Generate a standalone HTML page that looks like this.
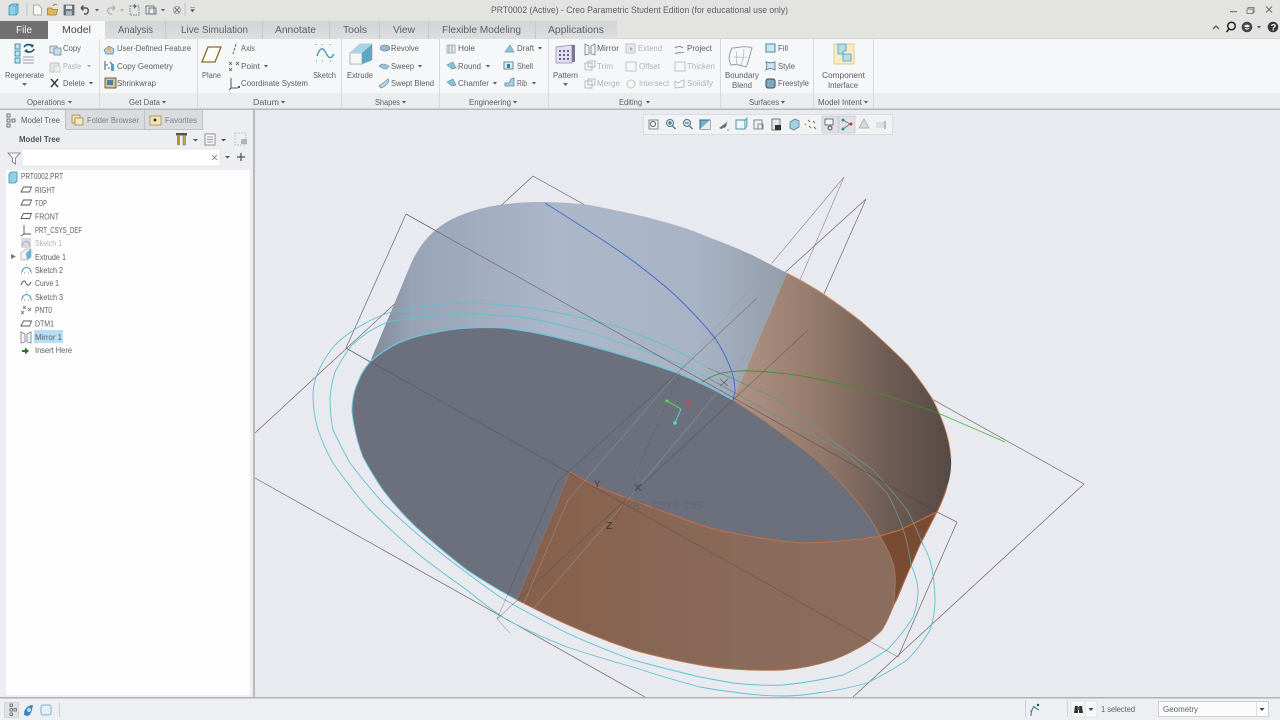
<!DOCTYPE html>
<html><head><meta charset="utf-8"><title>PRT0002 (Active) - Creo Parametric</title>
<style>
html,body{margin:0;padding:0;width:1280px;height:720px;overflow:hidden;background:#e9eaef}
svg{display:block;filter:blur(.35px)}
text{font-family:"Liberation Sans",sans-serif;font-size:8.6px;fill:#5a5f64}
.t{font-size:10.4px;fill:#5c6166}
.g{fill:#b0b3b6}
.l{fill:none;stroke:#6d666c;stroke-width:.7}
.ll{fill:none;stroke:#8b868c;stroke-width:.6}
</style></head><body>
<svg width="1280" height="720" viewBox="0 0 1280 720" xmlns="http://www.w3.org/2000/svg">
<defs>
<linearGradient id="bw" gradientUnits="userSpaceOnUse" x1="370" y1="0" x2="790" y2="0"><stop offset="0" stop-color="#7f8999"/><stop offset=".1" stop-color="#98a3b5"/><stop offset=".45" stop-color="#acb7ca"/><stop offset=".78" stop-color="#a8b3c5"/><stop offset="1" stop-color="#929ca9"/></linearGradient>
<linearGradient id="ow" gradientUnits="userSpaceOnUse" x1="740" y1="0" x2="951" y2="0"><stop offset="0" stop-color="#ae9283"/><stop offset=".4" stop-color="#917769"/><stop offset=".7" stop-color="#6e5c54"/><stop offset="1" stop-color="#564a46"/></linearGradient>
<linearGradient id="lw" gradientUnits="userSpaceOnUse" x1="520" y1="0" x2="895" y2="0"><stop offset="0" stop-color="#86604c"/><stop offset=".6" stop-color="#8a6a5a"/><stop offset="1" stop-color="#8b6d5e"/></linearGradient>
<linearGradient id="tb" x1="0" y1="0" x2="0" y2="1"><stop offset="0" stop-color="#d2d5d7"/><stop offset="1" stop-color="#dcdee0"/></linearGradient>
<g id="pl"><path d="M2.500 1h8l-2 5H0z" fill="none" stroke="#5c5c5c" stroke-width=".9"/></g>
<g id="sk"><path d="M1 8C2 2 9 2 10 8" fill="none" stroke="#3f93b4" stroke-width="1.100"/><path d="M0 9h1M3 9h1M7 9h1M10 9h1M5 1h1" stroke="#555" stroke-width=".8"/></g>
</defs>

<rect width="1280" height="720" fill="#e9eaef"/>
<rect width="1280" height="39" fill="#e3e4e2"/>
<rect y="39" width="1280" height="54" fill="#f6f7f9"/>
<rect y="93" width="1280" height="16" fill="#ebecee"/>
<rect y="38" width="1280" height="1" fill="#d4d6d8"/>
<rect y="108.500" width="1280" height="1.500" fill="#b5b7ba"/>

<!-- QAT -->
<path d="M9 6l3-2h6v9l-2 2H9z" fill="#8fd0e8" stroke="#3d8fb0" stroke-width=".8"/><path d="M9 6h7v9M16 6l2-2" fill="none" stroke="#3d8fb0" stroke-width=".6"/>
<rect x="26.500" y="3" width="1" height="13" fill="#c4c5c4"/>
<path d="M33.500 5h5l3 3v7h-8z" fill="#f7f7f5" stroke="#9a9a9a" stroke-width=".8"/>
<path d="M47.500 8h4l1 1.500h5l-1.500 5.500h-8.500z" fill="#e2b65e" stroke="#a37a30" stroke-width=".8"/><path d="M53 6c1-2 3-2 4-1" fill="none" stroke="#a37a30"/>
<rect x="64" y="5" width="10" height="10" fill="#6d7780" stroke="#4d555c" stroke-width=".7"/><rect x="66" y="5.500" width="6" height="3.500" fill="#e5e7e9"/><rect x="66" y="11" width="6" height="4" fill="#aeb4ba"/>
<path d="M81 8h5c3 0 3 5 0 6h-2M81 8l2.500-2.500M81 8l2.500 2.500" fill="none" stroke="#4a5058" stroke-width="1.400"/>
<path d="M95 9h4l-2 2.500z" fill="#5a5f64"/>
<path d="M115 8h-5c-3 0-3 5 0 6h2M115 8l-2.500-2.500M115 8l-2.500 2.500" fill="none" stroke="#aab0b6" stroke-width="1.300"/>
<path d="M120 9h4l-2 2.500z" fill="#aab0b6"/>
<rect x="130" y="6" width="9" height="9" fill="none" stroke="#6a7580" stroke-dasharray="1.500 1" stroke-width=".9"/><path d="M134 4l3 2-3 3z" fill="#2f7f9a"/>
<rect x="146" y="6" width="8" height="8" fill="#e8eaec" stroke="#66707a" stroke-width=".9"/><rect x="149" y="8" width="7" height="6" fill="none" stroke="#66707a" stroke-width=".9"/>
<path d="M161 9h4l-2 2.500z" fill="#5a5f64"/>
<path d="M174 7l6 6M180 7l-6 6" stroke="#6d7277" stroke-width="1"/><circle cx="177" cy="10" r="3.500" fill="none" stroke="#8a8f94" stroke-width=".7"/>
<rect x="184.500" y="3" width="1" height="13" fill="#c4c5c4"/>
<path d="M190 7.500h5M190.500 9.500h4l-2 2.500z" fill="#5a5f64" stroke="#5a5f64" stroke-width=".5"/>

<text x="491" y="13" textLength="297" lengthAdjust="spacingAndGlyphs" style="font-size:9.200px;fill:#5a5f63">PRT0002 (Active) - Creo Parametric Student Edition (for educational use only)</text>

<!-- window controls -->
<rect x="1230" y="11" width="7" height="1.200" fill="#777"/>
<rect x="1248" y="7.500" width="6" height="5" fill="none" stroke="#777" stroke-width=".9"/><rect x="1247" y="9" width="6" height="4.500" fill="#e3e4e2" stroke="#777" stroke-width=".9"/>
<path d="M1266 6.500l6 6M1272 6.500l-6 6" stroke="#777" stroke-width="1.200"/>
<path d="M1213 29l3-3 3 3" fill="none" stroke="#555" stroke-width="1.300"/>
<circle cx="1231.500" cy="26" r="3.800" fill="none" stroke="#222" stroke-width="1.500"/><path d="M1229 29l-2.500 3" stroke="#222" stroke-width="1.700"/>
<circle cx="1247" cy="27" r="5.300" fill="#3f4448"/><path d="M1243.500 26l3.500-1.500 3.500 1.500-3.500 1.500z" fill="#fff"/><path d="M1245 28c1 1.500 3 1.500 4 0" stroke="#fff" fill="none"/>
<path d="M1257 26h4l-2 2.500z" fill="#555"/>
<circle cx="1273" cy="27" r="5.300" fill="#33383c"/><text x="1270.500" y="30.500" style="font-size:9.500px;font-weight:bold;fill:#fff">?</text>

<!-- Tabs -->
<rect x="0" y="21" width="48" height="18" fill="#707070"/>
<rect x="105" y="21" width="512" height="18" fill="url(#tb)"/>
<rect x="48" y="21" width="57" height="19" fill="#f7f8fa"/>
<g fill="#c6c8ca"><rect x="165" y="21" width="1" height="18"/><rect x="262" y="21" width="1" height="18"/><rect x="329" y="21" width="1" height="18"/><rect x="379" y="21" width="1" height="18"/><rect x="428" y="21" width="1" height="18"/><rect x="535" y="21" width="1" height="18"/></g>
<text class="t" x="16" y="33" textLength="16" lengthAdjust="spacingAndGlyphs" style="fill:#f2f2f2">File</text>
<text class="t" x="62" y="33" textLength="29" lengthAdjust="spacingAndGlyphs" style="fill:#44494e">Model</text>
<text class="t" x="118" y="33" textLength="35" lengthAdjust="spacingAndGlyphs">Analysis</text>
<text class="t" x="181" y="33" textLength="67" lengthAdjust="spacingAndGlyphs">Live Simulation</text>
<text class="t" x="275" y="33" textLength="41" lengthAdjust="spacingAndGlyphs">Annotate</text>
<text class="t" x="343" y="33" textLength="24" lengthAdjust="spacingAndGlyphs">Tools</text>
<text class="t" x="393" y="33" textLength="22" lengthAdjust="spacingAndGlyphs">View</text>
<text class="t" x="442" y="33" textLength="79" lengthAdjust="spacingAndGlyphs">Flexible Modeling</text>
<text class="t" x="548" y="33" textLength="56" lengthAdjust="spacingAndGlyphs">Applications</text>

<g fill="#d8dadc"><rect x="99" y="39" width="1" height="69"/><rect x="197" y="39" width="1" height="69"/><rect x="341" y="39" width="1" height="69"/><rect x="439" y="39" width="1" height="69"/><rect x="548" y="39" width="1" height="69"/><rect x="720" y="39" width="1" height="69"/><rect x="813" y="39" width="1" height="69"/><rect x="873" y="39" width="1" height="69"/></g>

<!-- ribbon text -->
<text x="5" y="78" textLength="39" lengthAdjust="spacingAndGlyphs">Regenerate</text>
<path d="M22 83h5l-2.500 3z" fill="#666"/>
<text x="63" y="51" textLength="18" lengthAdjust="spacingAndGlyphs">Copy</text>
<text class="g" x="63" y="69" textLength="18" lengthAdjust="spacingAndGlyphs">Paste</text>
<text x="63" y="86" textLength="22" lengthAdjust="spacingAndGlyphs">Delete</text>
<text x="117" y="51" textLength="74" lengthAdjust="spacingAndGlyphs">User-Defined Feature</text>
<text x="117" y="69" textLength="56" lengthAdjust="spacingAndGlyphs">Copy Geometry</text>
<text x="117" y="86" textLength="39" lengthAdjust="spacingAndGlyphs">Shrinkwrap</text>
<text x="202" y="78" textLength="19" lengthAdjust="spacingAndGlyphs">Plane</text>
<text x="241" y="51" textLength="14" lengthAdjust="spacingAndGlyphs">Axis</text>
<text x="241" y="69" textLength="19" lengthAdjust="spacingAndGlyphs">Point</text>
<text x="241" y="86" textLength="67" lengthAdjust="spacingAndGlyphs">Coordinate System</text>
<text x="313" y="78" textLength="23" lengthAdjust="spacingAndGlyphs">Sketch</text>
<text x="347" y="78" textLength="26" lengthAdjust="spacingAndGlyphs">Extrude</text>
<text x="391" y="51" textLength="28" lengthAdjust="spacingAndGlyphs">Revolve</text>
<text x="391" y="69" textLength="23" lengthAdjust="spacingAndGlyphs">Sweep</text>
<text x="391" y="86" textLength="43" lengthAdjust="spacingAndGlyphs">Swept Blend</text>
<text x="458" y="51" textLength="17" lengthAdjust="spacingAndGlyphs">Hole</text>
<text x="458" y="69" textLength="23" lengthAdjust="spacingAndGlyphs">Round</text>
<text x="458" y="86" textLength="31" lengthAdjust="spacingAndGlyphs">Chamfer</text>
<text x="517" y="51" textLength="17" lengthAdjust="spacingAndGlyphs">Draft</text>
<text x="517" y="69" textLength="16" lengthAdjust="spacingAndGlyphs">Shell</text>
<text x="517" y="86" textLength="10" lengthAdjust="spacingAndGlyphs">Rib</text>
<text x="553" y="78" textLength="25" lengthAdjust="spacingAndGlyphs">Pattern</text>
<path d="M563 83h5l-2.500 3z" fill="#666"/>
<text x="597" y="51" textLength="22" lengthAdjust="spacingAndGlyphs">Mirror</text>
<text class="g" x="597" y="69" textLength="16" lengthAdjust="spacingAndGlyphs">Trim</text>
<text class="g" x="597" y="86" textLength="23" lengthAdjust="spacingAndGlyphs">Merge</text>
<text class="g" x="638" y="51" textLength="24" lengthAdjust="spacingAndGlyphs">Extend</text>
<text class="g" x="639" y="69" textLength="21" lengthAdjust="spacingAndGlyphs">Offset</text>
<text class="g" x="639" y="86" textLength="30" lengthAdjust="spacingAndGlyphs">Intersect</text>
<text x="687" y="51" textLength="25" lengthAdjust="spacingAndGlyphs">Project</text>
<text class="g" x="687" y="69" textLength="28" lengthAdjust="spacingAndGlyphs">Thicken</text>
<text class="g" x="687" y="86" textLength="26" lengthAdjust="spacingAndGlyphs">Solidify</text>
<text x="725" y="78" textLength="34" lengthAdjust="spacingAndGlyphs">Boundary</text>
<text x="732" y="88" textLength="20" lengthAdjust="spacingAndGlyphs">Blend</text>
<text x="778" y="51" textLength="10" lengthAdjust="spacingAndGlyphs">Fill</text>
<text x="778" y="69" textLength="17" lengthAdjust="spacingAndGlyphs">Style</text>
<text x="778" y="86" textLength="31" lengthAdjust="spacingAndGlyphs">Freestyle</text>
<text x="822" y="78" textLength="43" lengthAdjust="spacingAndGlyphs">Component</text>
<text x="828" y="88" textLength="30" lengthAdjust="spacingAndGlyphs">Interface</text>

<text x="27" y="105" textLength="38" lengthAdjust="spacingAndGlyphs">Operations</text>
<text x="129" y="105" textLength="31" lengthAdjust="spacingAndGlyphs">Get Data</text>
<text x="253" y="105" textLength="26" lengthAdjust="spacingAndGlyphs">Datum</text>
<text x="375" y="105" textLength="25" lengthAdjust="spacingAndGlyphs">Shapes</text>
<text x="469" y="105" textLength="42" lengthAdjust="spacingAndGlyphs">Engineering</text>
<text x="619" y="105" textLength="23" lengthAdjust="spacingAndGlyphs">Editing</text>
<text x="749" y="105" textLength="30" lengthAdjust="spacingAndGlyphs">Surfaces</text>
<text x="818" y="105" textLength="44" lengthAdjust="spacingAndGlyphs">Model Intent</text>
<g fill="#555"><path d="M68 101h4l-2 2.500z"/><path d="M162 101h4l-2 2.500z"/><path d="M281 101h4l-2 2.500z"/><path d="M402 101h4l-2 2.500z"/><path d="M513 101h4l-2 2.500z"/><path d="M646 101h4l-2 2.500z"/><path d="M781 101h4l-2 2.500z"/><path d="M864 101h4l-2 2.500z"/>
<path d="M87 65h4l-2 2.500z" fill="#aaa"/><path d="M89 82h4l-2 2.500z"/><path d="M264 65h4l-2 2.500z"/><path d="M418 65h4l-2 2.500z"/><path d="M486 65h4l-2 2.500z"/><path d="M493 82h4l-2 2.500z"/><path d="M538 47h4l-2 2.500z"/><path d="M532 82h4l-2 2.500z"/></g>

<!-- ribbon icons -->
<rect x="15" y="44" width="5" height="5" fill="#bfe3f0" stroke="#2f8aa8" stroke-width=".9"/><rect x="15" y="51" width="5" height="5" fill="#bfe3f0" stroke="#2f8aa8" stroke-width=".9"/><rect x="15" y="58" width="5" height="5" fill="#bfe3f0" stroke="#2f8aa8" stroke-width=".9"/>
<path d="M24 47c2-3 6-3 8-1M34 49c-1 3-6 4-8 2" fill="none" stroke="#14506e" stroke-width="1.600"/><path d="M30 44l4 1-2 3zM28 53l-4-2 3-2z" fill="#14506e"/>
<path d="M23 57h11M23 60h11M23 63h11" stroke="#9a9ea2" stroke-width="1"/>
<rect x="50" y="46" width="7" height="7" fill="#dbe3e8" stroke="#7f8e99" stroke-width=".8"/><rect x="54" y="48" width="7" height="7" fill="#c7dcea" stroke="#6b8ca3" stroke-width=".8"/>
<rect x="50" y="63" width="9" height="9" fill="#e4e5e3" stroke="#b8bbbd" stroke-width=".8"/><rect x="54" y="66" width="6" height="6" fill="#eee" stroke="#c5c8ca" stroke-width=".8"/>
<path d="M51 79l7 8M58 79l-7 8" stroke="#333" stroke-width="1.400"/>
<path d="M104 50l5-4 5 3-1 5h-7z" fill="#b5cfe0" stroke="#5b8199" stroke-width=".7"/><circle cx="109" cy="49" r="2" fill="#e6b659"/>
<path d="M105 61v9M105 65h3M110 62l3 3v6M110 68h-2" fill="none" stroke="#5c6a75" stroke-width="1.100"/><rect x="111" y="64" width="3" height="7" fill="#4fa2c4"/>
<rect x="105" y="78" width="11" height="10" fill="#d9c67a" stroke="#445" stroke-width=".8"/><rect x="107" y="80" width="6" height="5" fill="#3c89ad"/>
<path d="M208 47h13l-6 15h-13z" fill="#fbfaf6" stroke="#8c6a2a" stroke-width="1.300"/>
<path d="M236 44l-3 10" stroke="#666" stroke-width="1" stroke-dasharray="3 1"/>
<path d="M229 62l3 3M232 62l-3 3M236 62l3 3M239 62l-3 3M229 68l3 3M232 68l-3 3" stroke="#555" stroke-width=".8"/>
<path d="M231 78v10h7M229 90l2-2" fill="none" stroke="#555" stroke-width="1"/><rect x="238" y="86" width="2" height="2" fill="#555"/>
<path d="M317 56c3-9 6-9 9-3s5 6 8 1" fill="none" stroke="#3895b6" stroke-width="1.300"/>
<path d="M316 44v1M322 44v1M330 44v1M316 61h1M322 61h1M330 61h1" stroke="#777"/>
<path d="M350 53l10-9h12v16l-10 4h-12z" fill="#f1f2f3" stroke="#bbb" stroke-width=".8"/><path d="M350 53h12v11h-12z" fill="#f6f6f6" stroke="#aaa" stroke-width=".8"/><path d="M350 53l10-9h12l-10 9z" fill="#a5d4e5"/><path d="M362 53l10-9v16l-10 4z" fill="#5da7c3"/>
<ellipse cx="385" cy="48" rx="5" ry="3" fill="#9bb7c8" stroke="#5f7d90" stroke-width=".6"/>
<path d="M379 66c3-3 6-2 10 0l-2 3c-3 0-6-1-8-3z" fill="#9bc2d6" stroke="#6f8fa2" stroke-width=".6"/>
<path d="M379 86c3-2 6-4 9-7l1 2c-2 4-5 6-8 7z" fill="#bcd8e6" stroke="#5d88a0" stroke-width=".7"/>
<path d="M447 45h8v8h-8z" fill="#e4ebee" stroke="#8fa3ad" stroke-width=".8"/><path d="M449 45v8M452 45v8" stroke="#8fa3ad"/>
<path d="M447 65l6-3 3 6-4 1z" fill="#89c0d8" stroke="#6a9db4" stroke-width=".7"/>
<path d="M447 82l6-3 3 6-4 1z" fill="#89c0d8" stroke="#6a9db4" stroke-width=".7"/>
<path d="M505 52l5-7 4 7z" fill="#8cc2d8" stroke="#6a9db4" stroke-width=".7"/>
<rect x="504" y="62" width="9" height="7" fill="#e3e8ea" stroke="#6b8a9b"/><rect x="507" y="64" width="3" height="4" fill="#347fa2"/>
<path d="M505 86h9v-8l-3 1-2 4h-4z" fill="#a9d0e0" stroke="#5d8aa2" stroke-width=".8"/>
<path d="M556 47l16-2v18h-16z" fill="#e4dff0" stroke="#8c86a2" stroke-width=".7"/><rect x="572" y="45" width="3" height="17" fill="#7c7596"/>
<g fill="#6b5f92"><rect x="559" y="50" width="2" height="2"/><rect x="563" y="50" width="2" height="2"/><rect x="567" y="50" width="2" height="2"/><rect x="559" y="54" width="2" height="2"/><rect x="563" y="54" width="2" height="2"/><rect x="567" y="54" width="2" height="2"/><rect x="559" y="58" width="2" height="2"/><rect x="563" y="58" width="2" height="2"/><rect x="567" y="58" width="2" height="2"/></g>
<path d="M585 44l4 2v8l-4 1zM595 44l-4 2v8l4 1z" fill="#f2f1f6" stroke="#7a7a88" stroke-width=".8"/>
<rect x="585" y="63" width="7" height="7" fill="none" stroke="#b5b8ba"/><rect x="588" y="61" width="7" height="6" fill="none" stroke="#b5b8ba"/>
<rect x="585" y="81" width="7" height="7" fill="none" stroke="#b5b8ba"/><rect x="588" y="79" width="7" height="6" fill="none" stroke="#b5b8ba"/>
<rect x="626" y="44" width="9" height="9" fill="#e5e6e8" stroke="#c4c6c8"/><path d="M630 47l3 2-3 2z" fill="#aaa"/>
<rect x="626" y="62" width="10" height="9" fill="none" stroke="#c0c2c4"/>
<circle cx="631" cy="84" r="4" fill="none" stroke="#c0c2c4"/>
<path d="M675 48c2-2 6-2 8 0M675 54c3-3 6 0 9-2" fill="none" stroke="#7f8a94" stroke-width=".9"/>
<rect x="675" y="62" width="10" height="9" fill="none" stroke="#c0c2c4"/>
<path d="M675 88v-7l3 2 3-2 3-1v7z" fill="none" stroke="#bcbec0"/>
<path d="M731 65c-3-5-2-11 1-17 6 0 13-3 20 0-2 6-3 13-6 19-5-2-10-3-15-2z" fill="#f5f7f8" stroke="#8a9aa6" stroke-width=".9"/><path d="M736 51c1 5 1 10 0 14M744 49c0 5-1 11-3 16M733 57c5 0 10 0 16 1" fill="none" stroke="#9aa8b2" stroke-width=".6"/>
<rect x="766" y="44" width="9" height="8" fill="#cfe6f2" stroke="#3e8cae"/>
<path d="M766 70c1-3 1-6 0-8 3 1 6 1 9 0v8c-3-2-6-2-9 0z" fill="#cfe6f2" stroke="#5c8fab"/>
<rect x="766" y="79" width="9" height="9" rx="2" fill="#7fa8bd" stroke="#2b4f62"/>
<rect x="834" y="44" width="20" height="20" fill="#f8ecc4" stroke="#e0cd90"/><path d="M838 44h8v7h-3v3h-5zM843 54h8v7h-8z" fill="#b9dcec" stroke="#4b9ac0" stroke-width=".8"/>

<!-- Left panel -->
<rect x="0" y="110" width="255" height="587" fill="#eceef2"/>
<rect x="66" y="110" width="78" height="19" fill="#d9dbde"/><rect x="145" y="110" width="57" height="19" fill="#d9dbde"/>
<rect x="65" y="110" width="1" height="19" fill="#bfc1c4"/><rect x="144" y="110" width="1" height="19" fill="#bfc1c4"/><rect x="202" y="110" width="1" height="19" fill="#bfc1c4"/>
<rect x="66" y="129" width="137" height="1" fill="#bfc1c4"/>
<rect x="7" y="114" width="3" height="3" fill="none" stroke="#555" stroke-width=".8"/><rect x="7" y="119" width="3" height="3" fill="none" stroke="#555" stroke-width=".8"/><rect x="7" y="124" width="3" height="3" fill="none" stroke="#555" stroke-width=".8"/><rect x="12" y="119" width="3" height="3" fill="none" stroke="#555" stroke-width=".8"/>
<text x="21" y="123" textLength="39" lengthAdjust="spacingAndGlyphs">Model Tree</text>
<rect x="72" y="115" width="8" height="8" fill="#f3dfa7" stroke="#9e8a4f" stroke-width=".8"/><rect x="75" y="118" width="8" height="7" fill="#f4e6bd" stroke="#9e8a4f" stroke-width=".8"/>
<text x="87" y="123" textLength="52" lengthAdjust="spacingAndGlyphs" style="fill:#7a7e82">Folder Browser</text>
<rect x="150" y="116" width="11" height="9" fill="#f7e6b0" stroke="#a08c55" stroke-width=".8"/><circle cx="155" cy="120" r="1.500" fill="#333"/>
<text x="165" y="123" textLength="32" lengthAdjust="spacingAndGlyphs" style="fill:#7a7e82">Favorites</text>
<text x="19" y="142" textLength="41" lengthAdjust="spacingAndGlyphs" style="font-weight:bold;fill:#4f5458">Model Tree</text>
<rect x="176" y="133" width="11" height="2.500" fill="#555"/><rect x="177" y="135" width="3" height="10" fill="#b98f3c"/><rect x="183" y="135" width="2.500" height="10" fill="#c5a04a" stroke="#555" stroke-width=".4"/>
<path d="M193 139h5l-2.500 2.500z" fill="#555"/>
<rect x="205" y="134" width="10" height="11" fill="#fafafa" stroke="#777" stroke-width=".8"/><path d="M207 137h6M207 139.500h6M207 142h6" stroke="#777" stroke-width=".8"/>
<path d="M221 139h5l-2.500 2.500z" fill="#555"/>
<rect x="235" y="133" width="11" height="12" fill="none" stroke="#c0c2c4" stroke-dasharray="2 1"/><rect x="241" y="139" width="6" height="5" fill="#9a9ea2" opacity=".7"/>
<path d="M8 153h12l-4.500 5v6l-3-2v-4z" fill="#fafafa" stroke="#777" stroke-width=".8"/>
<rect x="22" y="149" width="198" height="17" fill="#fff" stroke="#e1e3e6" stroke-width=".8"/>
<path d="M212 155l5 5M217 155l-5 5" stroke="#8c8f92" stroke-width=".9"/>
<path d="M225 156h5l-2.500 2.500z" fill="#555"/>
<path d="M241 153v8M237 157h8" stroke="#666" stroke-width="1.500"/>
<rect x="6" y="170" width="244" height="525" fill="#fdfdfe"/>
<rect x="253" y="110" width="2" height="587" fill="#b8babd"/>
<path d="M9 174l2-2h6v9l-2 2H9z" fill="#8fd0e8" stroke="#3d8fb0" stroke-width=".8"/>
<text x="21" y="179" textLength="42" lengthAdjust="spacingAndGlyphs">PRT0002.PRT</text>
<use href="#pl" x="21" y="186"/><text x="35" y="193" textLength="20" lengthAdjust="spacingAndGlyphs">RIGHT</text>
<use href="#pl" x="21" y="199"/><text x="35" y="206" textLength="12" lengthAdjust="spacingAndGlyphs">TOP</text>
<use href="#pl" x="21" y="212.500"/><text x="35" y="219.500" textLength="24" lengthAdjust="spacingAndGlyphs">FRONT</text>
<path d="M24 225v9h7M21 236l3-2" fill="none" stroke="#555" stroke-width=".9"/><text x="35" y="233" textLength="47" lengthAdjust="spacingAndGlyphs">PRT_CSYS_DEF</text>
<rect x="21" y="238" width="10" height="10" fill="#d9dadb"/><path d="M22 246c1-6 7-6 8 0" fill="none" stroke="#aaa"/><text class="g" x="35" y="246" textLength="27" lengthAdjust="spacingAndGlyphs">Sketch 1</text>
<path d="M11 254l5 2.500-5 2.500z" fill="#777"/>
<path d="M21 253l5-4h5v8l-4 3h-6z" fill="#f1f3f5" stroke="#a6adb3" stroke-width=".7"/><path d="M26 253l5-4v8l-4 3z" fill="#6eb2cf"/><text x="35" y="260" textLength="31" lengthAdjust="spacingAndGlyphs">Extrude 1</text>
<use href="#sk" x="21" y="264"/><text x="35" y="273" textLength="28" lengthAdjust="spacingAndGlyphs">Sketch 2</text>
<path d="M21 285c2-5 4-5 5-2s3 3 5-1" fill="none" stroke="#555" stroke-width="1"/><text x="35" y="286" textLength="24" lengthAdjust="spacingAndGlyphs">Curve 1</text>
<use href="#sk" x="21" y="291"/><text x="35" y="300" textLength="28" lengthAdjust="spacingAndGlyphs">Sketch 3</text>
<path d="M23 306l3 3M26 306l-3 3M28 308l3 3M31 308l-3 3M21 311l3 3M24 311l-3 3" stroke="#666" stroke-width=".8"/><text x="35" y="313" textLength="17" lengthAdjust="spacingAndGlyphs">PNT0</text>
<use href="#pl" x="21" y="320"/><text x="35" y="326.500" textLength="19" lengthAdjust="spacingAndGlyphs">DTM1</text>
<path d="M21 332l4 2v8l-4 1zM31 332l-4 2v8l4 1z" fill="#f4f3f8" stroke="#777a88" stroke-width=".8"/>
<rect x="34" y="330" width="29" height="13" fill="#b8ddf6"/><text x="35" y="340" textLength="27" lengthAdjust="spacingAndGlyphs">Mirror 1</text>
<path d="M22 350h3v-2.500l4 3.500-4 3.500V352h-3z" fill="#1f7a2e"/><text x="35" y="353" textLength="37" lengthAdjust="spacingAndGlyphs">Insert Here</text>

<!-- MODEL: background datums -->
<path class="l" d="M255 433L533 176L1084 484L853 697"/>
<path class="l" d="M255 478L645 697"/>
<path class="l" d="M406 214L346 348M937 512L957 522L898 657"/>
<path class="l" d="M346 348L370 362M406 214L440 233"/>
<path class="ll" d="M844 177L772 263M844 177L800 280"/>
<path class="l" d="M866 199L808 330M866 199L757 298"/>

<!-- cyan in background -->
<g fill="none" stroke="#5fc0d4" stroke-width=".9">
<path d="M388 313Q374 318 362 325Q346 334 335 345Q324 358 318 372Q313 384 313 395Q313 412 318 430Q324 447 333 463Q349 486 367 507Q391 531 417 553Q441 572 467 590Q486 606 507 620Q536 635 567 647Q600 658 633 667Q666 678 700 687Q716 690 733 692Q758 696 783 696Q800 696 817 693Q843 690 867 683Q888 673 907 660Q921 646 930 630Q935 616 935 600Q935 580 930 560Q927 552 923 545"/>
<path d="M388 322Q378 326 368 332Q360 338 352 345Q342 358 335 372Q331 385 330 398Q330 414 333 430Q341 447 350 463Q366 484 383 503Q407 526 433 547Q466 573 500 597Q533 616 567 633Q600 648 633 660Q666 669 700 677Q716 680 733 683Q758 686 783 685Q813 682 843 675Q866 664 887 650Q902 635 913 617Q918 604 918 590Q917 577 911 565"/>
</g>

<!-- body -->
<path d="M370 362L410 266Q420 242 438 228Q456 214 488 207Q512 202 540 202Q565 202 590 205L633 214Q655 219 675 225Q692 230 708 237Q730 245 752 255L787 273L733 400Q705 384 675 372Q640 360 605 350Q580 343 555 337Q530 331 505 328Q487 327 468 328Q450 329 432 333Q415 336 398 343Q382 351 370 362z" fill="url(#bw)"/>
<path d="M787 273Q805 282 822 293Q843 307 862 322Q886 343 908 365Q921 381 932 398Q940 413 945 428Q950 443 951 458Q952 473 947 487Q943 500 937 512L900 530L880 536L873 523Q863 508 850 493Q835 476 817 460Q797 444 777 430Q755 414 733 400z" fill="url(#ow)"/>
<path d="M352 412Q352 395 358 382Q362 371 370 362Q382 351 398 343Q415 336 432 333Q450 329 468 328Q487 327 505 328Q530 331 555 337Q580 343 605 350Q640 360 675 372Q705 384 733 400Q755 414 777 430Q797 444 817 460Q835 476 850 493Q863 508 873 523L880 536Q865 539 850 540Q825 543 800 543Q766 540 733 533Q716 530 700 525Q664 512 627 498Q610 492 593 485Q581 479 570 472L517 600Q491 586 467 570Q441 550 417 528Q398 510 383 490Q372 474 363 457Q358 444 355 430Q353 421 352 412z" fill="#6b707c"/>
<path d="M570 472Q581 479 593 485Q610 492 627 498Q664 512 700 525Q716 530 733 533Q766 540 800 543Q825 543 850 540Q865 539 880 536Q888 549 893 563Q896 575 895 587Q895 597 893 607Q888 620 882 630Q875 637 867 643Q851 653 833 660Q808 668 783 670Q758 671 733 669Q716 668 700 665Q666 659 633 650Q606 641 580 630Q556 620 533 608L517 600z" fill="url(#lw)"/>
<path d="M880 536L900 530L937 512L920 545L897 600L893 607Q895 597 895 587Q896 575 893 563Q888 549 880 536z" fill="#7a4b33"/>

<!-- edges -->
<g fill="none" stroke-linejoin="round">
<path d="M370 362Q382 351 398 343Q415 336 432 333Q450 329 468 328Q487 327 505 328Q530 331 555 337Q580 343 605 350Q640 360 675 372Q705 384 733 400" stroke="#6cc3dc" stroke-width="1.300"/>
<path d="M352 412Q352 395 358 382Q362 371 370 362" stroke="#6cc3dc" stroke-width="1"/>
<path d="M517 600Q491 586 467 570Q441 550 417 528Q398 510 383 490Q372 474 363 457Q358 444 355 430Q353 421 352 412" stroke="#6cc3dc" stroke-width=".9"/>
<path d="M570 472Q581 479 593 485Q610 492 627 498Q664 512 700 525Q716 530 733 533Q766 540 800 543Q825 543 850 540Q865 539 880 536L900 530L937 512Q943 500 947 487" stroke="#c76f42" stroke-width="1.100"/>
<path d="M517 600L533 608Q556 620 580 630Q606 641 633 650Q666 659 700 665Q716 668 733 669Q758 671 783 670Q808 668 833 660Q851 653 867 643Q875 637 882 630Q888 620 893 607L920 545L937 512" stroke="#b9764f" stroke-width=".9"/>
<path d="M787 273Q805 282 822 293Q843 307 862 322Q886 343 908 365Q921 381 932 398Q940 413 945 428Q950 443 951 458" stroke="#dd9a6e" stroke-width=".8"/>
<path d="M733 400Q755 414 777 430Q797 444 817 460Q835 476 850 493Q863 508 873 523L880 536Q888 549 893 563Q896 575 895 587Q895 597 893 607" stroke="#b07a5a" stroke-width=".8"/>
<path d="M388 313Q404 309 422 307Q438 304 458 303Q481 303 505 305Q530 308 555 312Q589 319 622 328Q649 338 675 350Q692 358 708 368" stroke="#5fc0d4" stroke-width=".9"/>
<path d="M388 322Q404 319 422 317Q446 315 472 314Q497 315 522 317Q555 323 588 332Q632 346 675 362Q692 369 708 378" stroke="#5fc0d4" stroke-width=".9"/>
<path d="M708 368Q741 382 775 398Q804 419 832 441Q853 455 873 470Q891 489 907 510Q916 527 923 545" stroke="#6f8f8c" stroke-width=".9"/>
<path d="M708 378Q741 396 775 415Q810 433 845 453Q867 472 887 493Q898 513 905 535Q909 550 911 565" stroke="#6f8f8c" stroke-width=".9"/>
<path d="M545 203Q585 228 622 253Q650 273 675 295Q697 316 715 338Q726 355 732 372Q735 382 735 392L733 400" stroke="#3f6fc8" stroke-width="1"/>
<path d="M702 382Q710 377 718 374Q735 370 752 371Q780 372 808 377Q842 384 875 392Q907 402 938 413" stroke="#3f8f32" stroke-width=".9"/>
<path d="M938 413L1005 442" stroke="#4fb84a" stroke-width=".9"/>
</g>

<!-- datums over body -->
<g fill="none">
<path d="M346 348L898 657" stroke="#4a3f45" stroke-width=".6" opacity=".55"/>
<path d="M406 214L937 512" stroke="#4a424a" stroke-width=".7" opacity=".65"/>
<path d="M757 298L675 375L557 482L497 619" stroke="#4b454c" stroke-width=".6" opacity=".5"/>
<path d="M808 330L733 400L497 619" stroke="#4b454c" stroke-width=".6" opacity=".55"/>
<path d="M772 263L680 370" stroke="#8d95a2" stroke-width=".5" opacity=".6"/>
<path d="M680 370L600 463L568 500L510 636" stroke="#d4d3d8" stroke-width=".5" opacity=".45"/>
<path d="M800 280L717 393" stroke="#8d95a2" stroke-width=".5" opacity=".6"/>
<path d="M717 393L640 485L510 636" stroke="#d8d8dc" stroke-width=".5" opacity=".5"/>
<path d="M680 373L633 480" stroke="#4b454c" stroke-width=".5" stroke-dasharray="3 2" opacity=".5"/>
<path d="M626 500L615 520" stroke="#a5413a" stroke-width=".8"/>
<path d="M497 619L510 633" stroke="#777" stroke-width=".5"/>
</g>
<text x="626" y="509" textLength="79" lengthAdjust="spacingAndGlyphs" style="font-size:11px;fill:#62656f;opacity:.7">PRT_CSYS_DEF</text>
<text x="594" y="487" style="font-size:9.500px;fill:#4a3a38">Y</text>
<path d="M635 484l6 7M641 484l-6 7" stroke="#3a3a42" stroke-width=".7"/>
<text x="606" y="529" style="font-size:10.500px;fill:#4a2f28">Z</text>
<path d="M720 379l8 7M728 379l-8 7" stroke="#5b5563" stroke-width=".6"/>
<path d="M667 401L681 409" stroke="#5fe05a" stroke-width="1"/><path d="M681 409L675 423" stroke="#52d6c8" stroke-width="1"/>
<circle cx="667" cy="401" r="1.500" fill="#4fe04f"/><circle cx="675" cy="423" r="1.700" fill="#3fe6d0"/><circle cx="688" cy="403" r="2" fill="#d8424a"/>

<!-- graphics toolbar -->
<rect x="643.500" y="114.500" width="249" height="20" fill="#f1f2f4" stroke="#dcdde0"/>
<rect x="822" y="116" width="16" height="17" fill="#dfe1e4" stroke="#c6c8cb" stroke-width=".7"/>
<rect x="839" y="116" width="16" height="17" fill="#dfe1e4" stroke="#c6c8cb" stroke-width=".7"/>
<rect x="649" y="120" width="9" height="9" fill="none" stroke="#7d8a94"/><circle cx="653" cy="124" r="2.500" fill="none" stroke="#556"/>
<circle cx="670" cy="123" r="3.500" fill="#dceaf2" stroke="#557080"/><path d="M668 123h4M670 121v4" stroke="#2a5a74"/><path d="M672.500 126l3 3" stroke="#556" stroke-width="1.200"/>
<circle cx="687" cy="123" r="3.500" fill="#dceaf2" stroke="#557080"/><path d="M685 123h4" stroke="#2a5a74"/><path d="M689.500 126l3 3" stroke="#556" stroke-width="1.200"/>
<rect x="700" y="120" width="10" height="9" fill="#6fb0cc" stroke="#3a6a84"/><path d="M700 129l10-9v9z" fill="#e7eef2"/>
<path d="M719 128l8-6 1-3-2 8-5 2z" fill="#6b7078"/><circle cx="728" cy="130" r=".6" fill="#333"/>
<rect x="736" y="120" width="9" height="9" fill="#eef6fa" stroke="#4f8ea9"/><path d="M745 120l2-2v8l-2 3" fill="#9fcde0" stroke="#4f8ea9" stroke-width=".7"/>
<rect x="754" y="120" width="8" height="9" fill="#f2f3f4" stroke="#7b8994"/><path d="M758 124h5v5h-5z" fill="none" stroke="#7b8994"/>
<rect x="772" y="119" width="8" height="11" fill="#e6e8ea" stroke="#777"/><rect x="775" y="125" width="6" height="5" fill="#333"/>
<path d="M790 122l5-3 4 2v6l-5 3-4-2z" fill="#a9cfe0" stroke="#4c8099" stroke-width=".8"/>
<path d="M808 120l2 2M813 121l2 2M809 126l2 2M814 127l2 2M805 124l1 1" stroke="#8a6a3a" stroke-width="1"/>
<rect x="825" y="119" width="8" height="6" fill="#f2f3f4" stroke="#555" stroke-width=".8"/><circle cx="830" cy="128" r="2" fill="none" stroke="#555"/>
<path d="M843 120l7 4-7 5" fill="none" stroke="#777" stroke-width="1"/><circle cx="843" cy="120" r="1.500" fill="#2b8ca6"/><circle cx="851" cy="124" r="1.500" fill="#c33"/><circle cx="843" cy="129" r="1.500" fill="#2b8ca6"/>
<path d="M864 119l-5 9h10z" fill="#d6d8da" stroke="#b4b6b8"/>
<path d="M876 122h9v6h-9z" fill="#dcdde0"/><path d="M885 121v8" stroke="#bbb" stroke-width="2"/>

<!-- status bar -->
<rect y="697" width="1280" height="23" fill="#edeff2"/>
<rect y="697" width="1280" height="1.500" fill="#b0b2b4"/>
<rect x="4.500" y="702.500" width="14" height="15" fill="#e0e1e3" stroke="#c9cbcd" stroke-width=".7"/>
<rect x="10" y="704" width="2.500" height="2.500" fill="none" stroke="#555" stroke-width=".7"/><rect x="10" y="708.500" width="2.500" height="2.500" fill="none" stroke="#555" stroke-width=".7"/><rect x="10" y="713" width="2.500" height="2.500" fill="none" stroke="#555" stroke-width=".7"/><rect x="14" y="708.500" width="2.500" height="2.500" fill="none" stroke="#555" stroke-width=".7"/>
<path d="M24 714c0-5 4-9 9-9-1 4-1 9-5 11-2 0-4-1-4-2z" fill="#3a87c2"/><circle cx="29" cy="710" r="2" fill="#bcdcf0"/>
<rect x="41" y="705" width="10" height="10" rx="2" fill="#e4f0f8" stroke="#7fb0cf"/>
<rect x="59" y="703" width="1" height="14" fill="#c9cbcd"/>
<rect x="1025" y="700" width="1" height="17" fill="#cfd1d3"/>
<path d="M1034 706c-2 3-3 6-3 10M1034 707l5 3M1032 711h-2" fill="none" stroke="#3e7f98" stroke-width="1.100"/><circle cx="1038" cy="705" r="1.200" fill="#345"/>
<rect x="1067" y="700" width="1" height="17" fill="#cfd1d3"/>
<rect x="1071" y="701" width="14" height="16" fill="#f7f8f9" stroke="#d6d8da" stroke-width=".6"/>
<rect x="1085" y="701" width="12" height="16" fill="#f7f8f9" stroke="#d6d8da" stroke-width=".6"/>
<path d="M1074 713l1-7h3v7zM1079 713v-7h3l1 7z" fill="#333"/><rect x="1077" y="707" width="3" height="3" fill="#555"/>
<path d="M1088.500 708h5l-2.500 3z" fill="#444"/>
<text x="1101" y="712" textLength="34" lengthAdjust="spacingAndGlyphs">1 selected</text>
<rect x="1158.500" y="701.500" width="110" height="15" fill="#fbfbfc" stroke="#cdcfd1"/>
<rect x="1256" y="702" width="1" height="14" fill="#dfe1e3"/>
<text x="1163" y="712" textLength="35" lengthAdjust="spacingAndGlyphs">Geometry</text>
<path d="M1259.500 708h5l-2.500 3z" fill="#444"/>
</svg>
</body></html>
